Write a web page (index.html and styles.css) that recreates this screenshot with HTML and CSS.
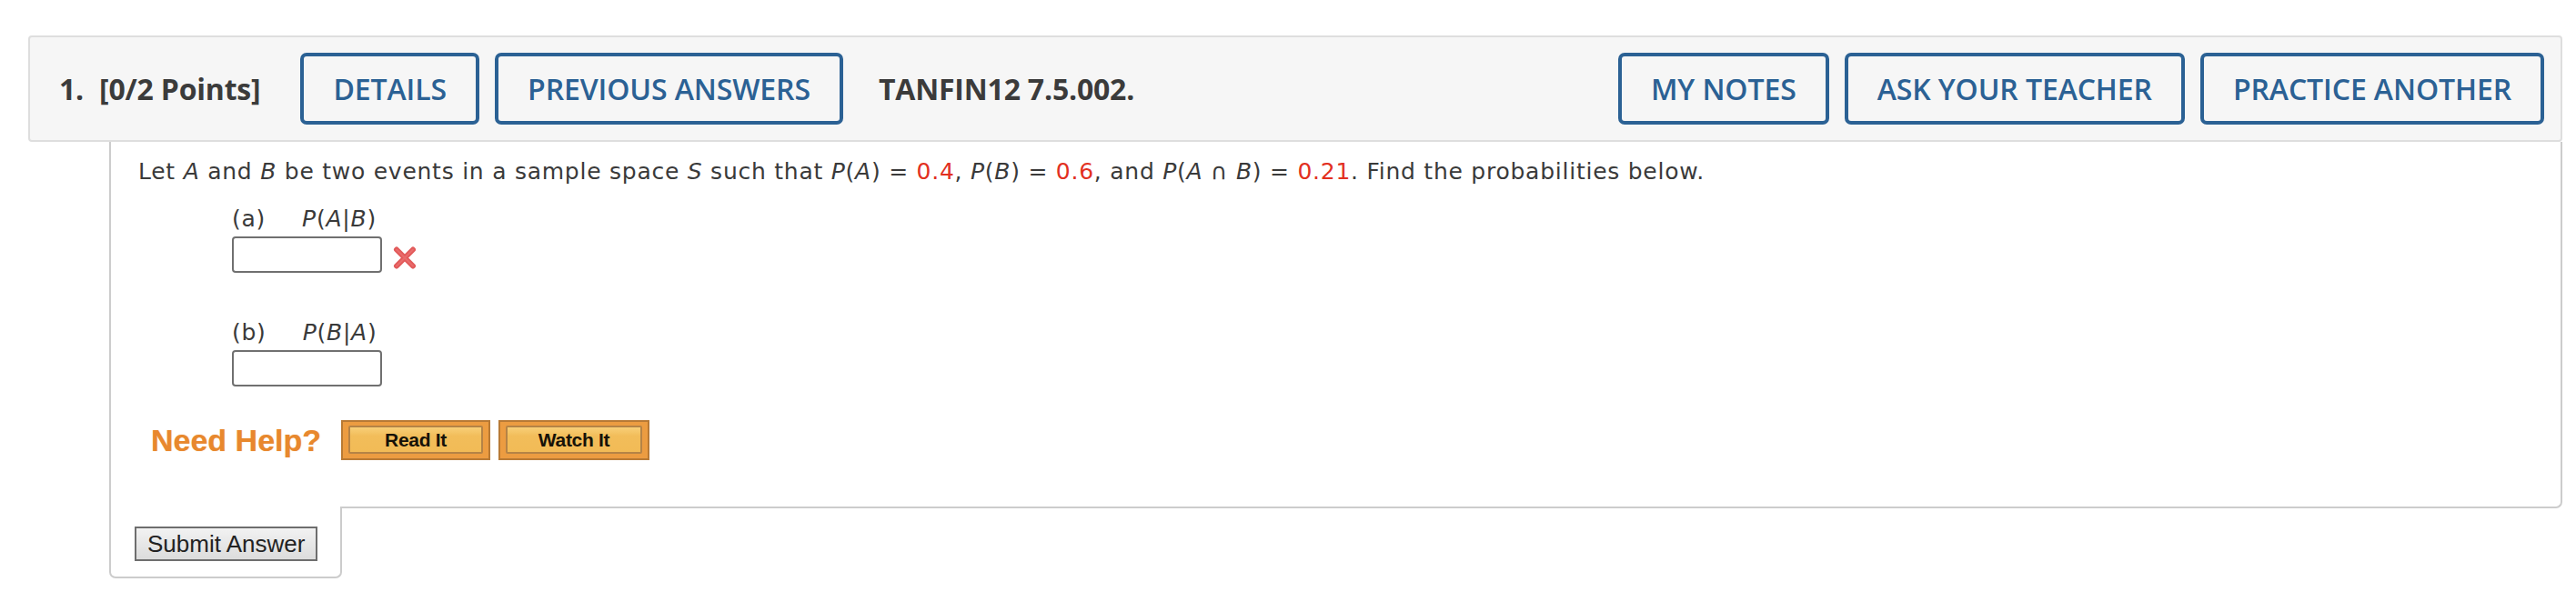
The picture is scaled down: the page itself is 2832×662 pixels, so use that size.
FILE: index.html
```html
<!DOCTYPE html>
<html lang="en">
<head>
<meta charset="utf-8">
<title>Question 1</title>
<link rel="stylesheet" href="styles.css">
</head>
<body>
<div class="page">
  <div class="q-header">
    <span class="q-num">1.</span>
    <span class="q-points">[0/2 Points]</span>
    <button class="hbtn">DETAILS</button>
    <button class="hbtn">PREVIOUS ANSWERS</button>
    <span class="q-id">TANFIN12 7.5.002.</span>
    <span class="spacer"></span>
    <button class="hbtn">MY NOTES</button>
    <button class="hbtn">ASK YOUR TEACHER</button>
    <button class="hbtn">PRACTICE ANOTHER</button>
  </div>
  <div class="q-body">
    <p class="prompt">Let <i>A</i> and <i>B</i> be two events in a sample space <i>S</i> such that <i>P</i>(<i>A</i>) = <span class="num">0.4</span>, <i>P</i>(<i>B</i>) = <span class="num">0.6</span>, and <i>P</i>(<i>A</i> &cap; <i>B</i>) = <span class="num">0.21</span>. Find the probabilities below.</p>
    <div class="part">
      <div class="part-label"><span class="letter">(a)</span><span class="expr"><i>P</i>(<i>A</i>|<i>B</i>)</span></div>
      <div class="answer-row">
        <input class="answer" type="text">
        <svg class="wrong" width="26" height="25" viewBox="0 0 26 25" aria-hidden="true">
          <path d="M4 3.5 L22 21.5 M22 3.5 L4 21.5" stroke="#e25a5a" stroke-width="6" stroke-linecap="round"/>
          <path d="M4 3.5 L22 21.5 M22 3.5 L4 21.5" stroke="#ee7878" stroke-width="2" stroke-linecap="round" opacity="0.6"/>
        </svg>
      </div>
    </div>
    <div class="part part-b">
      <div class="part-label"><span class="letter">(b)</span><span class="expr"><i>P</i>(<i>B</i>|<i>A</i>)</span></div>
      <div class="answer-row">
        <input class="answer" type="text">
      </div>
    </div>
    <div class="help-row">
      <span class="need-help">Need Help?</span>
      <a class="help-btn"><span>Read It</span></a>
      <a class="help-btn help-btn-wide"><span>Watch It</span></a>
    </div>
  </div>
  <div class="submit-tab">
    <button class="submit">Submit Answer</button>
  </div>
</div>
</body>
</html>
```

FILE: styles.css
```css
html, body {
  margin: 0;
  padding: 0;
  background: #ffffff;
}

.page {
  padding: 39px 15px 0 31px;
}

.q-header {
  display: flex;
  align-items: center;
  background: #f6f6f6;
  border: 2px solid #dedede;
  border-radius: 4px;
  padding: 17px 18px 17px 32px;
  font-family: "Open Sans", "Liberation Sans", sans-serif;
}

.q-num, .q-points, .q-id {
  font-weight: 700;
  font-size: 32px;
  color: #3b3b3b;
  letter-spacing: -0.2px;
}

.q-num {
  margin-right: 17px;
}

.q-points {
  margin-right: 44px;
}

.q-id {
  margin-left: 22px;
}

.spacer {
  flex: 1;
}

.hbtn {
  font-family: "Open Sans", "Liberation Sans", sans-serif;
  font-weight: 600;
  font-size: 32px;
  line-height: 39px;
  color: #2b6194;
  background: transparent;
  border: 4px solid #2b6194;
  border-radius: 7px;
  padding: 16px 32px;
  margin-right: 17px;
  letter-spacing: -0.1px;
}

.hbtn:last-child {
  margin-right: 0;
}

.q-body {
  margin-left: 89px;
  border: 2px solid #cccccc;
  border-top: none;
  border-bottom-right-radius: 7px;
  padding: 15px 30px 51px 30px;
  font-family: Verdana, "DejaVu Sans", sans-serif;
  font-size: 25px;
  letter-spacing: 0.75px;
  color: #3a3a3a;
}

.prompt {
  margin: 0;
  line-height: 36px;
}

.num {
  color: #e2301f;
}

.part {
  margin-left: 103px;
  margin-top: 16px;
}

.part-b {
  margin-top: 48px;
}

.part-label {
  line-height: 36px;
}

.letter {
  margin-right: 40px;
}

.answer-row {
  display: flex;
  align-items: center;
  margin-top: 1px;
}

.answer {
  box-sizing: border-box;
  width: 165px;
  height: 40px;
  border: 2px solid #707070;
  border-radius: 4px;
  margin: 0;
  padding: 0 6px;
  background: #fff;
}

.wrong {
  margin-left: 12px;
  margin-top: 7px;
}

.help-row {
  display: flex;
  align-items: center;
  margin-top: 37px;
  margin-left: 14px;
}

.need-help {
  font-family: "Liberation Sans", Arial, sans-serif;
  font-weight: 700;
  font-size: 34px;
  letter-spacing: 0;
  color: #e8882d;
  margin-right: 22px;
  text-shadow: 0 0 1px rgba(232, 136, 45, 0.6);
}

.help-btn {
  display: block;
  background: #ec9c41;
  border: 2px solid #b87a35;
  padding: 4px 6px 5px 6px;
  margin-right: 9px;
  letter-spacing: 0;
}

.help-btn span {
  display: block;
  width: 148px;
  box-sizing: border-box;
  text-align: center;
  background: linear-gradient(#f8cf78, #f2bd5a 35%, #f2bb56);
  border: 2px solid #b58346;
  border-radius: 2px;
  font-family: "Liberation Sans", Arial, sans-serif;
  font-weight: 700;
  font-size: 21px;
  line-height: 27px;
  color: #161208;
  letter-spacing: -0.3px;
}

.help-btn-wide span {
  width: 150px;
}

.submit-tab {
  width: 256px;
  box-sizing: border-box;
  margin-left: 89px;
  margin-top: -2px;
  background: #ffffff;
  border: 2px solid #cccccc;
  border-top: none;
  border-radius: 0 0 7px 7px;
  padding: 22px 0 17px 26px;
}

.submit {
  display: block;
  font-family: "Liberation Sans", Arial, sans-serif;
  font-size: 26px;
  line-height: 30px;
  color: #222;
  background: linear-gradient(#f2f2f2, #dcdcdc);
  border: 2px solid #6e6e6e;
  border-radius: 0;
  padding: 2px 12px;
}
```
